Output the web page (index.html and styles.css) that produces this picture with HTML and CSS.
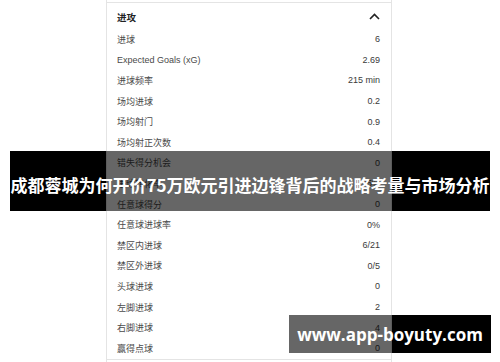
FILE: index.html
```html
<!DOCTYPE html>
<html lang="zh-CN">
<head>
<meta charset="utf-8">
<title>成都蓉城为何开价75万欧元引进边锋背后的战略考量与市场分析</title>
<link rel="stylesheet" href="styles.css">
</head>
<body>
<div class="page">
  <div class="panel">
    <div class="panel-top"></div>
    <section class="group">
      <div class="group-head">
        <span class="group-title">进攻</span>
        <svg class="chevron" width="11" height="7" viewBox="0 0 11 7"><path d="M1 6 L5.5 1.5 L10 6" fill="none" stroke="#222" stroke-width="1.6"/></svg>
      </div>
      <ul class="stats">
        <li><span>进球</span><span>6</span></li>
        <li><span>Expected Goals (xG)</span><span>2.69</span></li>
        <li><span>进球频率</span><span>215 min</span></li>
        <li><span>场均进球</span><span>0.2</span></li>
        <li><span>场均射门</span><span>0.9</span></li>
        <li><span>场均射正次数</span><span>0.4</span></li>
        <li><span>错失得分机会</span><span>0</span></li>
        <li><span>进球转化率</span><span>25%</span></li>
        <li><span>任意球得分</span><span>0</span></li>
        <li><span>任意球进球率</span><span>0%</span></li>
        <li><span>禁区内进球</span><span>6/21</span></li>
        <li><span>禁区外进球</span><span>0/5</span></li>
        <li><span>头球进球</span><span>0</span></li>
        <li><span>左脚进球</span><span>2</span></li>
        <li><span>右脚进球</span><span>4</span></li>
        <li><span>赢得点球</span><span>0</span></li>
      </ul>
    </section>
    <div class="panel-foot"></div>
  </div>
</div>

<div class="strip-back title-pos"></div>
<div class="strip-front title-pos"><h1 class="title">成都蓉城为何开价75万欧元引进边锋背后的战略考量与市场分析</h1></div>

<div class="strip-back mark-pos"></div>
<div class="strip-front mark-pos"><span class="mark">www.app-boyuty.com</span></div>
</body>
</html>
```

FILE: styles.css
```css
html, body {
  margin: 0;
  padding: 0;
  background: #ffffff;
  overflow: hidden;
}

.page {
  height: 362px;
  padding-left: 106px;
  position: relative;
  z-index: 1;
}

.panel {
  width: 284px;
  height: 362px;
  background: #ffffff;
  border-left: 1px solid #e4e4e4;
  border-right: 1px solid #e4e4e4;
  font-family: "Liberation Sans", "Noto Sans CJK SC", sans-serif;
}

.panel-top {
  height: 2px;
  border-bottom: 1px solid #e4e4e4;
}

.group {
  padding: 0 10px;
}

.group-head {
  height: 25px;
  display: flex;
  align-items: center;
  justify-content: space-between;
  padding-top: 1px;
}

.group-title {
  font-size: 9.5px;
  font-weight: bold;
  color: #222;
}

.chevron {
  display: block;
  margin-right: 1px;
}

.stats {
  list-style: none;
  margin: 0;
  padding: 0;
}

.stats li {
  height: 20.6px;
  display: flex;
  align-items: center;
  justify-content: space-between;
  font-size: 9px;
  color: #4a4a4a;
}

.stats li span:last-child {
  color: #3a3a3a;
  padding-right: 1px;
}

.panel-foot {
  border-top: 1px solid #e4e4e4;
}

/* overlay strips */
.strip-back {
  position: absolute;
  background: #000;
  z-index: 0;
}

.strip-front {
  position: absolute;
  background: rgba(0, 0, 0, 0.6);
  z-index: 2;
  display: flex;
  align-items: center;
  justify-content: center;
}

.title-pos {
  left: 10px;
  top: 151px;
  width: 480px;
  height: 60px;
}

.mark-pos {
  left: 289px;
  top: 315px;
  width: 202px;
  height: 38px;
}

.title {
  margin: 0;
  white-space: nowrap;
  color: #fff;
  font-family: "Noto Sans CJK SC", sans-serif;
  font-weight: bold;
  font-size: 17px;
  line-height: 1;
  padding-top: 6px;
}

.mark {
  white-space: nowrap;
  color: #fff;
  font-family: "Open Sans", "Noto Sans", sans-serif;
  font-weight: bold;
  font-size: 17px;
  line-height: 1;
}
```
